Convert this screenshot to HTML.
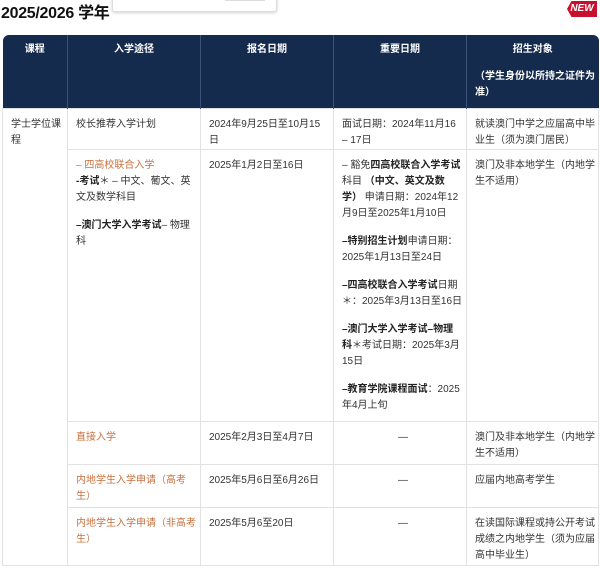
<!DOCTYPE html>
<html><head><meta charset="utf-8"><style>
*{margin:0;padding:0;box-sizing:border-box}
body{width:600px;height:568px;overflow:hidden;background:#fff;font-family:"Liberation Sans","Noto Sans CJK SC",sans-serif;color:#333;position:relative}
.title{position:absolute;left:1px;top:-1px;font-size:16px;font-weight:bold;color:#111;font-family:"Liberation Sans Narrow","Liberation Sans","Noto Sans CJK SC",sans-serif;letter-spacing:-0.3px}
.search{position:absolute;left:112px;top:-6px;width:165px;height:18px;border:1px solid #ddd;border-radius:3px;box-shadow:0 1px 3px rgba(0,0,0,.18);background:#fff}
.search i{position:absolute;left:112px;top:0;width:40px;height:6px;border:1px solid #ddd;border-top:none}
.new{position:absolute;left:567px;top:1px;width:30px;height:16px;background:#c8102e;color:#fff;font-size:10px;font-weight:bold;font-style:italic;line-height:16px;text-align:center;clip-path:polygon(15% 0,100% 0,100% 100%,15% 100%,0 50%)}
table{position:absolute;left:2px;top:35px;width:596px;border-collapse:collapse;table-layout:fixed;font-size:10px;line-height:16px}
th{background:#152b4d;color:#fff;font-weight:bold;vertical-align:top;padding:7px 4px;border-left:1px solid #3b5376;font-size:10px;height:71px;white-space:nowrap}
th:first-child{border-left:none;border-top-left-radius:6px}
th:last-child{border-top-right-radius:6px}
td{vertical-align:top;padding:0;border:1px solid #e2e2e2}
td>div{padding:8px 2px 0 8px;overflow:hidden;white-space:nowrap}
.o{color:#c8703f}
.c{text-align:center}
p+p{margin-top:12px}
b{color:#222}
</style></head><body>
<div class="title">2025/2026 学年</div>
<div class="search"><i></i></div>
<div class="new">NEW</div>
<table>
<colgroup><col style="width:65px"><col style="width:133px"><col style="width:133px"><col style="width:133px"><col style="width:132px"></colgroup>
<tr><th>课程</th><th>入学途径</th><th>报名日期</th><th>重要日期</th><th>招生对象<div style="margin-top:11px;text-align:left;padding-left:4px;line-height:16px">（学生身份以所持之证件为<br>准）</div></th></tr>
<tr><td rowspan="5"><div style="height:456px">学士学位课<br>程</div></td><td><div style="height:40px">校长推荐入学计划</div></td><td><div>2024年9月25日至10月15<br>日</div></td><td><div>面试日期：2024年11月16<br>– 17日</div></td><td><div>就读澳门中学之应届高中毕<br>业生（须为澳门居民）</div></td></tr>
<tr><td><div style="height:271px"><p><span class="o">– 四高校联合入学</span><br><b>-考试</b>＊ – 中文、葡文、英<br>文及数学科目</p><p><b>–澳门大学入学考试</b>– 物理<br>科</p></div></td><td><div>2025年1月2日至16日</div></td><td><div style="height:271px"><p>– 豁免<b>四高校联合入学考试</b><br>科目 <b>（中文、英文及数<br>学）</b> 申请日期：2024年12<br>月9日至2025年1月10日</p><p><b>–特别招生计划</b>申请日期：<br>2025年1月13日至24日</p><p><b>–四高校联合入学考试</b>日期<br>＊：2025年3月13日至16日</p><p><b>–澳门大学入学考试–物理<br>科</b>＊考试日期：2025年3月<br>15日</p><p><b>–教育学院课程面试</b>：2025<br>年4月上旬</p></div></td><td><div>澳门及非本地学生（内地学<br>生不适用）</div></td></tr>
<tr><td class="o"><div style="height:42px">直接入学</div></td><td><div>2025年2月3日至4月7日</div></td><td class="c"><div>—</div></td><td><div>澳门及非本地学生（内地学<br>生不适用）</div></td></tr>
<tr><td class="o"><div style="height:42px">内地学生入学申请（高考<br>生）</div></td><td><div>2025年5月6日至6月26日</div></td><td class="c"><div>—</div></td><td><div>应届内地高考学生</div></td></tr>
<tr><td class="o"><div style="height:57px">内地学生入学申请（非高考<br>生）</div></td><td><div>2025年5月6至20日</div></td><td class="c"><div>—</div></td><td><div style="height:57px">在读国际课程或持公开考试<br>成绩之内地学生（须为应届<br>高中毕业生）</div></td></tr>
</table>
</body></html>
